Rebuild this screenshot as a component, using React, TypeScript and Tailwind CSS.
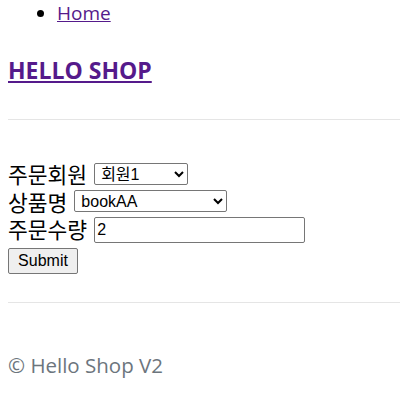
import React from "react";

export default function App() {
  return (
    <div className="pl-2 bg-white min-h-[401px] text-black" style={{ fontFamily: "'Open Sans', 'Noto Sans CJK KR', sans-serif" }}>
      <ul className="list-disc pl-[49px] text-[19px] leading-[26px]">
        <li>
          <a href="#" className="text-[#551a8b] underline">Home</a>
        </li>
      </ul>
      <h1 className="mt-[28px] text-[23px] font-bold leading-[32px]">
        <a href="#" className="text-[#551a8b] underline">HELLO SHOP</a>
      </h1>
      <hr className="mt-[33px] border-t border-[#e5e5e5]" />
      <form className="mt-[37px] flex flex-col" style={{ fontFamily: "'Noto Sans CJK KR', 'Liberation Sans', sans-serif" }}>
        <div className="flex items-end gap-[7px] h-[28px]">
          <label className="text-[21.5px] leading-[22px] mb-[0px]">주문회원</label>
          <select className="w-[94px] h-[22px] border border-[#767676] rounded-[2px] text-[16px] px-[2px]" style={{ fontFamily: "'Liberation Sans', 'Noto Sans CJK KR', sans-serif", appearance: "auto" }}>
            <option>회원1</option>
          </select>
        </div>
        <div className="flex items-end gap-[7px] h-[27px]">
          <label className="text-[21.5px] leading-[22px] mb-[-1px]">상품명</label>
          <select className="w-[153px] h-[22px] border border-[#767676] rounded-[2px] text-[16px] px-[2px]" style={{ fontFamily: "'Liberation Sans', sans-serif", appearance: "auto" }}>
            <option>bookAA</option>
          </select>
        </div>
        <div className="flex items-end gap-[7px] h-[31px]">
          <label className="text-[21.5px] leading-[22px] mb-[3px]">주문수량</label>
          <input defaultValue="2" className="w-[211px] h-[26px] border border-[#767676] rounded-[2px] text-[16px] px-[2px]" style={{ fontFamily: "'Liberation Sans', sans-serif" }} />
        </div>
        <div className="mt-[4px]">
          <button type="button" className="w-[70px] h-[26px] border border-[#767676] rounded-[2px] bg-[#efefef] text-[16px]" style={{ fontFamily: "'Liberation Sans', sans-serif" }}>Submit</button>
        </div>
      </form>
      <hr className="mt-[28px] border-t border-[#e5e5e5]" />
      <p className="mt-[47px] text-[20.5px] leading-[30px] text-[#6c757d]">© Hello Shop V2</p>
    </div>
  );
}
